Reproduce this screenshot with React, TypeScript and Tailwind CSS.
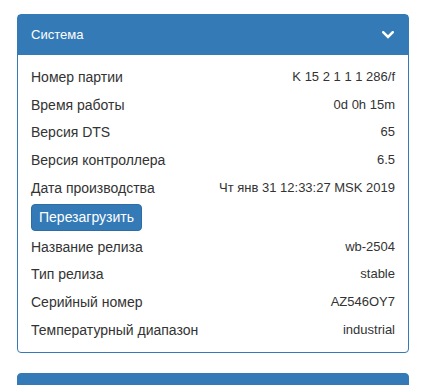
const rowsTop: [string, string][] = [
  ["Номер партии", "K 15 2 1 1 1 286/f"],
  ["Время работы", "0d 0h 15m"],
  ["Версия DTS", "65"],
  ["Версия контроллера", "6.5"],
  ["Дата производства", "Чт янв 31 12:33:27 MSK 2019"],
];

const rowsBottom: [string, string][] = [
  ["Название релиза", "wb-2504"],
  ["Тип релиза", "stable"],
  ["Серийный номер", "AZ546OY7"],
  ["Температурный диапазон", "industrial"],
];

function Row({ label, value }: { label: string; value: string }) {
  return (
    <div className="flex h-[27.75px] items-center justify-between">
      <span>{label}</span>
      <span className="text-[13px]">{value}</span>
    </div>
  );
}

function Chevron() {
  return (
    <svg width="12" height="8" viewBox="0 0 12 8" className="block">
      <path d="M1.3 1.3 L6 6 L10.7 1.3" fill="none" stroke="#fff" strokeWidth="2.6" strokeLinecap="square" />
    </svg>
  );
}

export default function App() {
  return (
    <div className="h-[385px] overflow-hidden bg-white px-[17px] pt-[14px] text-[14px] leading-[20px] text-[#333]" style={{ fontFamily: '"Liberation Sans", Arial, sans-serif' }}>
      {/* System panel */}
      <div className="rounded-[4px] border border-[#337ab7] bg-white">
        <div className="flex h-[40px] items-center justify-between bg-[#337ab7] pl-[13px] pr-[14px] text-white">
          <span className="text-[13px]">Система</span>
          <Chevron />
        </div>
        <div className="px-[13px] pt-2 pb-2">
          {rowsTop.map(([l, v]) => (
            <Row key={l} label={l} value={v} />
          ))}
          <div className="flex h-[31px] items-center">
            <button className="h-[27px] rounded-[4px] border border-[#2e6da4] bg-[#337ab7] px-[7px] text-[14px] text-white">
              Перезагрузить
            </button>
          </div>
          {rowsBottom.map(([l, v]) => (
            <Row key={l} label={l} value={v} />
          ))}
        </div>
      </div>

      {/* next panel */}
      <div className="mt-[20px] h-[40px] rounded-t-[4px] border border-[#337ab7] bg-[#337ab7]" />
    </div>
  );
}
